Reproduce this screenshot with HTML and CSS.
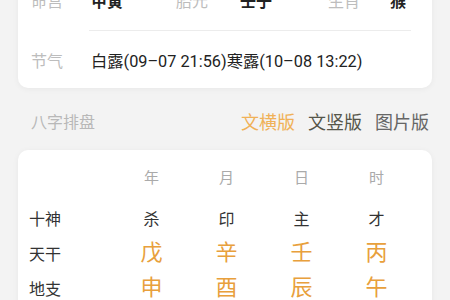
FILE: index.html
```html
<!DOCTYPE html>
<html lang="zh">
<head>
<meta charset="utf-8">
<link rel="stylesheet" href="styles.css">
</head>
<body>
<div class="page">
  <section class="card info">
    <div class="row-top">
      <span class="lbl">命宫</span><span class="val strong">甲寅</span>
      <span class="lbl">胎元</span><span class="val strong">壬子</span>
      <span class="lbl">生肖</span><span class="val strong">猴</span>
    </div>
    <div class="divider"></div>
    <div class="row-jq">
      <span class="lbl">节气</span><span class="val latin">白露(09–07 21:56)寒露(10–08 13:22)</span>
    </div>
  </section>

  <div class="sec-head">
    <span class="sec-title">八字排盘</span>
    <div class="tabs">
      <span class="tab active">文横版</span>
      <span class="tab alt">文竖版</span>
      <span class="tab">图片版</span>
    </div>
  </div>

  <section class="card pan">
    <div class="grid head">
      <span></span><span>年</span><span>月</span><span>日</span><span>时</span>
    </div>
    <div class="grid gap-top">
      <span class="rlbl">十神</span><span class="ss">杀</span><span class="ss">印</span><span class="ss">主</span><span class="ss">才</span>
    </div>
    <div class="grid">
      <span class="rlbl">天干</span><span class="gz">戊</span><span class="gz">辛</span><span class="gz">壬</span><span class="gz">丙</span>
    </div>
    <div class="grid">
      <span class="rlbl">地支</span><span class="gz">申</span><span class="gz">酉</span><span class="gz">辰</span><span class="gz">午</span>
    </div>
  </section>
</div>
</body>
</html>
```
FILE: styles.css
```css
html, body {
  margin: 0;
  padding: 0;
  background: #f3f3f3;
  overflow: hidden;
}
body {
  font-family: "Noto Sans CJK SC", "Noto Sans", sans-serif;
  width: 450px;
  height: 300px;
}
.page {
  padding: 0 18px;
  margin-top: -30px;
}
.card {
  background: #fff;
  border-radius: 10px;
  box-shadow: 0 1px 6px rgba(0,0,0,0.05);
}
.info {
  padding: 0 21px 0 13px;
}
.row-top {
  height: 60px;
  display: grid;
  grid-template-columns: 60px 85px 64px 88px 62px auto;
  align-items: center;
  font-size: 16px;
}
.lbl {
  color: #bdbdbd;
  font-size: 16px;
}
.val {
  color: #222;
  font-size: 16px;
}
.latin {
  font-family: "Roboto", "Noto Sans CJK SC", sans-serif;
  font-size: 16.3px;
}
.strong {
  font-weight: 700;
}
.divider {
  height: 1px;
  background: #ececec;
  margin-left: 58px;
}
.row-jq {
  height: 57px;
  display: grid;
  grid-template-columns: 60px auto;
  align-items: center;
}
.sec-head {
  height: 62px;
  display: flex;
  align-items: center;
  justify-content: space-between;
  padding: 4px 3px 0 13px;
  box-sizing: border-box;
}
.sec-title {
  color: #b8b8b8;
  font-size: 16px;
}
.tabs {
  display: flex;
  gap: 13px;
}
.tab {
  font-size: 18px;
  color: #666;
}
.tab.active {
  color: #f0b157;
}
.tab.alt {
  color: #56564a;
}
.pan {
  padding: 8px 0 20px 11px;
}
.grid {
  display: grid;
  grid-template-columns: 85px repeat(4, 75px);
  align-items: center;
  height: 35px;
}
.grid span {
  text-align: center;
}
.grid .rlbl {
  text-align: left;
  font-size: 16px;
  color: #333;
}
.head {
  height: 36px;
  font-size: 15px;
  color: #aaa;
}
.gap-top {
  margin-top: 6px;
}
.ss {
  font-size: 16px;
  color: #333;
}
.gz {
  font-size: 22px;
  color: #e8a03c;
  margin-top: -6px;
}
```
